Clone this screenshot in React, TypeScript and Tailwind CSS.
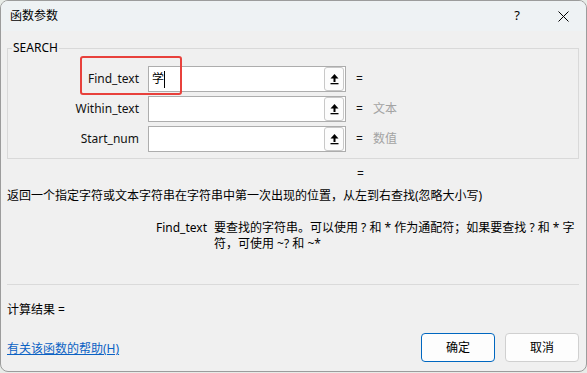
import React from "react";

const font = { fontFamily: '"Noto Sans", "Noto Sans CJK SC", sans-serif' };

function UpIcon() {
  return (
    <svg width="9" height="11" viewBox="0 0 9 11">
      <polygon points="4.5,0 8.5,4.5 0.5,4.5" fill="#000" />
      <rect x="3.5" y="4" width="2" height="4" fill="#000" />
      <rect x="0.5" y="9" width="8" height="1.3" fill="#000" />
    </svg>
  );
}

function Row({ label, value, hint, cursor }: { label: string; value?: string; hint?: string; cursor?: boolean }) {
  return (
    <div className="flex items-center h-[26px]">
      <div className="w-[131px] text-right text-[12px] leading-[16px] text-[#111]">{label}</div>
      <div className="ml-[9px] w-[198px] h-[26px] border border-[#adadad] bg-white flex items-center">
        <div className="pl-[3px] flex items-center text-[12px] leading-[16px] text-black">
          {value}
          {cursor && <span className="inline-block w-px h-[17px] bg-black" />}
        </div>
        <div className="ml-auto mr-px w-[20px] h-[24px] rounded-[3px] border border-[#c8c8c8] bg-[#fcfcfc] flex items-center justify-center">
          <UpIcon />
        </div>
      </div>
      <div className="ml-[10px] text-[12px] leading-[16px] text-[#111]">=</div>
      {hint && <div className="ml-[10px] text-[12px] leading-[16px] text-[#a3a3a3]">{hint}</div>}
    </div>
  );
}

export default function App() {
  return (
    <div className="w-[587px] h-[373px] bg-[#e8ece8]" style={font}>
      <div className="w-[587px] h-[372px] rounded-[8px] border border-[#9c9c9c] overflow-hidden flex flex-col bg-[#f0f0f0]">
        <div className="h-[30px] shrink-0 bg-[#eef2f4] flex items-center">
          <div className="pl-[9px] text-[12px] leading-[16px] text-black">函数参数</div>
          <div className="ml-auto flex items-center h-full">
            <div className="w-[46px] h-full flex items-center justify-center text-[13px] text-black">?</div>
            <div className="w-[46px] h-full flex items-center justify-center">
              <svg width="11" height="11" viewBox="0 0 11 11">
                <path d="M0.5 0.5 L10.5 10.5 M10.5 0.5 L0.5 10.5" stroke="#000" strokeWidth="1" />
              </svg>
            </div>
          </div>
        </div>
        <div className="flex-1 flex flex-col px-[6px] relative">
          <fieldset className="mt-[9px] w-[572px] border border-[#d9d9d9] pb-[6px] flex flex-col gap-[4px]">
            <legend className="ml-[4px] px-[1px] text-[12px] leading-[16px] text-black">SEARCH</legend>
            <div className="mt-[10px] flex flex-col gap-[4px]">
              <Row label="Find_text" value="学" cursor />
              <Row label="Within_text" hint="文本" />
              <Row label="Start_num" hint="数值" />
            </div>
          </fieldset>
          <div className="absolute left-[79px] top-[25px] w-[102px] h-[39px] rounded-[3px] border-2 border-[#e8413c]" />
          <div className="mt-[7px] ml-[350px] text-[12px] leading-[16px] text-[#111]">=</div>
          <div className="mt-[6px] text-[12px] leading-[16px] text-black">
            返回一个指定字符或文本字符串在字符串中第一次出现的位置，从左到右查找(忽略大小写)
          </div>
          <div className="mt-[16px] flex text-[12px] leading-[16px] text-black">
            <div className="ml-[149px] w-[58px]">Find_text</div>
            <div className="flex flex-col">
              <div className="whitespace-nowrap">要查找的字符串。可以使用 ? 和 * 作为通配符；如果要查找 ? 和 * 字</div>
              <div className="whitespace-nowrap">符，可使用 ~? 和 ~*</div>
            </div>
          </div>
          <div className="mt-[32px] w-[572px] h-px bg-[#dadada]" />
          <div className="mt-[17px] text-[12px] leading-[16px] text-black">计算结果 =</div>
          <div className="mt-[15px] flex items-start">
            <div className="mt-[8px] text-[12px] leading-[16px] text-[#0b62c4] underline">有关该函数的帮助(H)</div>
            <div className="ml-auto mr-[1px] flex gap-[10px]">
              <div className="w-[74px] h-[29px] rounded-[4px] border border-[#0067c0] bg-[#fdfdfd] flex items-center justify-center text-[12px] text-black">确定</div>
              <div className="w-[74px] h-[29px] rounded-[4px] border border-[#d0d0d0] bg-[#fdfdfd] flex items-center justify-center text-[12px] text-black">取消</div>
            </div>
          </div>
        </div>
      </div>
    </div>
  );
}
